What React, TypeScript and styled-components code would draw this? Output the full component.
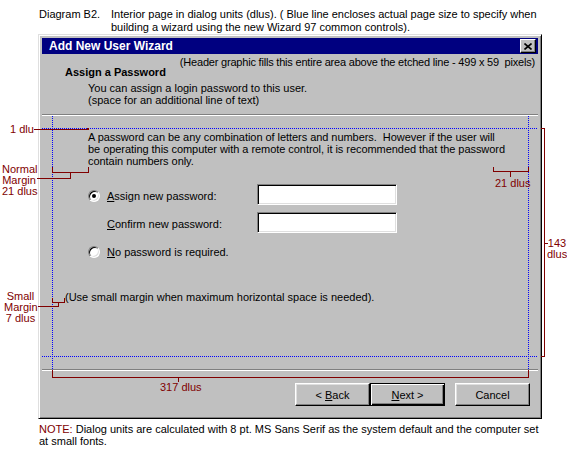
import React from 'react';
import styled, { createGlobalStyle } from 'styled-components';

// == styles =======================================================================================
const GlobalStyle = createGlobalStyle`
  html, body {
    margin: 0;
    padding: 0;
    background: #fff;
  }
  body {
    font-family: 'Liberation Sans', Arial, sans-serif;
  }
`;

const Page = styled.div`
  position: relative;
  width: 567px;
  height: 451px;
  overflow: hidden;
  background: #fff;
  color: #000;
  font-family: 'Liberation Sans', Arial, sans-serif;
  font-size: 11px;
  line-height: 12px;
`;

const Caption = styled.div`
  display: flex;
  height: 26px;
  padding: 8px 0 0 39px;
  line-height: 13px;
`;

const CaptionLabel = styled.div`
  flex: none;
  width: 72px;
`;

const Dialog = styled.div`
  display: flex;
  flex-direction: column;
  box-sizing: border-box;
  width: 504px;
  height: 385px;
  margin-left: 38px;
  padding: 3px;
  background: #c0c0c0;
  border: 1px solid;
  border-color: #dfdfdf #000 #000 #dfdfdf;
  box-shadow: inset 1px 1px #fff, inset -1px -1px #808080;
`;

const TitleBar = styled.div`
  display: flex;
  align-items: center;
  justify-content: space-between;
  flex: none;
  height: 16px;
  padding: 0 2px 0 7px;
  background: #000080;
  color: #fff;
  font-size: 12px;
  font-weight: bold;
`;

const CloseButton = styled.div`
  display: flex;
  align-items: center;
  justify-content: center;
  box-sizing: border-box;
  width: 16px;
  height: 14px;
  background: #c0c0c0;
  border: 1px solid;
  border-color: #fff #000 #000 #fff;
  box-shadow: inset -1px -1px #808080;
`;

const Header = styled.div`
  flex: none;
  box-sizing: border-box;
  height: 60px;
  padding-top: 2px;
`;

const HeaderNote = styled.div`
  padding-right: 3px;
  text-align: right;
  letter-spacing: -0.2px;
  white-space: nowrap;
`;

const PageTitle = styled.div`
  margin-top: -2px;
  padding-left: 23px;
  font-weight: bold;
`;

const PageSubtitle = styled.div`
  margin-top: 4px;
  padding-left: 46px;
`;

const Etched = styled.div`
  flex: none;
  height: 0;
  border-top: 1px solid #808080;
  border-bottom: 1px solid #fff;
`;

const Body = styled.div`
  flex: none;
  box-sizing: border-box;
  height: 253px;
  padding: 15px 0 0 23px;
`;

const Indent = styled.div`
  padding-left: 23px;
`;

const Paragraph = styled.p`
  margin: 0 0 17px;
  letter-spacing: -0.05px;
  white-space: nowrap;
`;

const OptionRow = styled.div`
  display: flex;
  align-items: flex-start;
  height: 21px;
  & + & {
    margin-top: 7px;
  }
`;

const Radio = styled.span<{ $checked?: boolean }>`
  position: relative;
  flex: none;
  box-sizing: border-box;
  width: 12px;
  height: 12px;
  margin-top: 6px;
  border-radius: 50%;
  background: #fff;
  border: 1px solid;
  border-color: #808080 #fff #fff #808080;
  box-shadow: inset 1px 1px #000, inset -1px -1px #dfdfdf;
  &::after {
    content: '';
    display: ${ ( p ) => ( p.$checked ? 'block' : 'none' ) };
    position: absolute;
    left: 3px;
    top: 3px;
    width: 4px;
    height: 4px;
    border-radius: 50%;
    background: #000;
  }
`;

const RadioSlot = styled.span`
  flex: none;
  width: 12px;
`;

const OptionLabel = styled.label`
  flex: none;
  width: 150px;
  margin: 6px 0 0 7px;
  white-space: nowrap;
`;

const TextBox = styled.div`
  box-sizing: border-box;
  width: 140px;
  height: 21px;
  background: #fff;
  border: 1px solid;
  border-color: #808080 #fff #fff #808080;
  box-shadow: inset 1px 1px #000, inset -1px -1px #dfdfdf;
`;

const SmallNote = styled.div`
  margin-top: 30px;
  white-space: nowrap;
`;

const Footer = styled.div`
  display: flex;
  justify-content: flex-end;
  align-items: flex-start;
  flex: 1;
  padding: 12px 8px 0 0;
`;

const Button = styled.div<{ $default?: boolean; $spaced?: boolean }>`
  display: flex;
  align-items: center;
  justify-content: center;
  box-sizing: border-box;
  width: 75px;
  height: 23px;
  margin-left: ${ ( p ) => ( p.$spaced ? '10px' : '0' ) };
  background: #c0c0c0;
  border: 1px solid;
  border-color: ${ ( p ) => ( p.$default ? '#000' : '#fff #000 #000 #fff' ) };
  box-shadow: ${ ( p ) => ( p.$default
    ? 'inset 1px 1px #fff, inset -1px -1px #000, inset -2px -2px #808080'
    : 'inset -1px -1px #808080, inset 1px 1px #dfdfdf' ) };
  white-space: pre;
`;

const Key = styled.span`
  text-decoration: underline;
  text-underline-offset: 1px;
`;

const Footnote = styled.div`
  margin-top: 4px;
  padding-left: 39px;
  white-space: nowrap;
`;

const NoteTag = styled.span`
  color: #800000;
`;

const Overlay = styled.svg`
  position: absolute;
  left: 0;
  top: 0;
  width: 567px;
  height: 451px;
  pointer-events: none;
`;

const DimLabel = styled.div<{ $x: number; $y: number; $w?: number }>`
  position: absolute;
  left: ${ ( p ) => p.$x }px;
  top: ${ ( p ) => p.$y }px;
  width: ${ ( p ) => ( p.$w ? `${ p.$w }px` : 'auto' ) };
  color: #800000;
  line-height: 11px;
  text-align: center;
  white-space: nowrap;
`;

// == dimension lines ==============================================================================
// [ 'h', y, x0, x1 ] or [ 'v', x, y0, y1 ], pixel rows/columns, end exclusive
type Seg = [ 'h' | 'v', number, number, number ];

const blueSegs: Seg[] = [
  [ 'h', 128, 42, 538 ],
  [ 'h', 356, 42, 538 ],
  [ 'v', 52, 116, 369 ],
  [ 'v', 528, 116, 369 ],
];

const redSegs: Seg[] = [
  // 1 dlu
  [ 'h', 129, 34, 88 ],
  // normal margin
  [ 'h', 172, 52, 89 ],
  [ 'v', 52, 167, 172 ],
  [ 'v', 88, 167, 172 ],
  [ 'v', 70, 172, 178 ],
  [ 'h', 178, 37, 71 ],
  // right margin
  [ 'h', 171, 493, 529 ],
  [ 'v', 493, 167, 171 ],
  [ 'v', 528, 167, 171 ],
  [ 'v', 510, 171, 177 ],
  // small margin
  [ 'h', 302, 52, 65 ],
  [ 'v', 52, 298, 302 ],
  [ 'v', 64, 298, 302 ],
  [ 'v', 58, 302, 306 ],
  [ 'h', 306, 38, 59 ],
  // page height
  [ 'v', 544, 128, 357 ],
  [ 'h', 128, 541, 545 ],
  [ 'h', 356, 541, 545 ],
  [ 'h', 243, 544, 548 ],
  // page width
  [ 'h', 377, 52, 529 ],
  [ 'v', 52, 370, 377 ],
  [ 'v', 528, 370, 377 ],
  [ 'v', 178, 377, 382 ],
];

const toPath = ( segs: Seg[] ) => segs.map( ( [ dir, at, from, to ] ) => (
  dir === 'h' ? `M${ from } ${ at + 0.5 }H${ to }` : `M${ at + 0.5 } ${ from }V${ to }`
) ).join( '' );

const Dimensions: React.FC = () => (
  <Overlay viewBox="0 0 567 451" shapeRendering="crispEdges">
    <path d={ toPath( blueSegs ) } stroke="#0000ff" strokeWidth="1" strokeDasharray="1 1" fill="none" />
    <path d={ toPath( redSegs ) } stroke="#800000" strokeWidth="1" fill="none" />
    <rect x="87" y="128" width="2" height="2" fill="#800000" />
  </Overlay>
);

// == element ======================================================================================
export default function App() {
  return <>
    <GlobalStyle />
    <Page>
      <Caption>
        <CaptionLabel>Diagram B2.</CaptionLabel>
        <div>
          Interior page in dialog units (dlus). ( Blue line encloses actual page size to specify when<br />
          building a wizard using the new Wizard 97 common controls).
        </div>
      </Caption>

      <Dialog>
        <TitleBar>
          <span>Add New User Wizard</span>
          <CloseButton>
            <svg width="8" height="7" viewBox="0 0 8 7">
              <path d="M0.5 0.5L7.5 6.5M7.5 0.5L0.5 6.5" stroke="#000" strokeWidth="1.6" fill="none" />
            </svg>
          </CloseButton>
        </TitleBar>

        <Header>
          <HeaderNote>(Header graphic fills this entire area above the etched line - 499 x 59 &nbsp;pixels)</HeaderNote>
          <PageTitle>Assign a Password</PageTitle>
          <PageSubtitle>
            You can assign a login password to this user.<br />
            (space for an additional line of text)
          </PageSubtitle>
        </Header>
        <Etched />

        <Body>
          <Indent>
            <Paragraph>
              A password can be any combination of letters and numbers.&nbsp; However if the user will<br />
              be operating this computer with a remote control, it is recommended that the password<br />
              contain numbers only.
            </Paragraph>
            <OptionRow>
              <Radio $checked />
              <OptionLabel><Key>A</Key>ssign new password:</OptionLabel>
              <TextBox />
            </OptionRow>
            <OptionRow>
              <RadioSlot />
              <OptionLabel><Key>C</Key>onfirm new password:</OptionLabel>
              <TextBox />
            </OptionRow>
            <OptionRow>
              <Radio />
              <OptionLabel><Key>N</Key>o password is required.</OptionLabel>
            </OptionRow>
          </Indent>
          <SmallNote>(Use small margin when maximum horizontal space is needed).</SmallNote>
        </Body>
        <Etched />

        <Footer>
          <Button><span>&lt; <Key>B</Key>ack</span></Button>
          <Button $default><span><Key>N</Key>ext &gt;</span></Button>
          <Button $spaced>Cancel</Button>
        </Footer>
      </Dialog>

      <Footnote>
        <NoteTag>NOTE:</NoteTag> Dialog units are calculated with 8 pt. MS Sans Serif as the system default and the computer set<br />
        at small fonts.
      </Footnote>

      <Dimensions />
      <DimLabel $x={ 10 } $y={ 124 }>1 dlu</DimLabel>
      <DimLabel $x={ 2 } $y={ 164 } $w={ 34 }>Normal<br />Margin<br />21 dlus</DimLabel>
      <DimLabel $x={ 495 } $y={ 178 }>21 dlus</DimLabel>
      <DimLabel $x={ 4 } $y={ 291 } $w={ 33 }>Small<br />Margin<br />7 dlus</DimLabel>
      <DimLabel $x={ 547 } $y={ 238 } $w={ 20 }>143<br />dlus</DimLabel>
      <DimLabel $x={ 160 } $y={ 382 }>317 dlus</DimLabel>
    </Page>
  </>;
}
